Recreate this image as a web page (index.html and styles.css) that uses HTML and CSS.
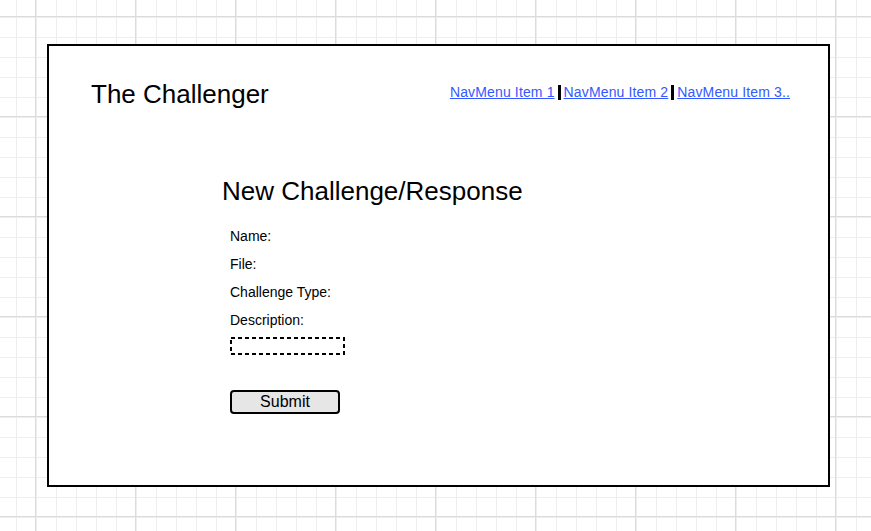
FILE: index.html
```html
<!DOCTYPE html>
<html lang="en">
<head>
<meta charset="utf-8">
<title>The Challenger</title>
<link rel="stylesheet" href="styles.css">
</head>
<body>
<div class="frame">
  <header class="header">
    <div class="brand">The Challenger</div>
    <nav class="nav">
      <a href="#" class="nav-link">NavMenu Item 1</a><span class="sep"></span><a href="#" class="nav-link">NavMenu Item 2</a><span class="sep"></span><a href="#" class="nav-link">NavMenu Item 3..</a>
    </nav>
  </header>
  <main class="content">
    <h1 class="heading">New Challenge/Response</h1>
    <form class="form">
      <div class="label">Name:</div>
      <div class="label">File:</div>
      <div class="label">Challenge Type:</div>
      <div class="label">Description:</div>
      <svg class="desc-box" width="115" height="18" viewBox="0 0 115 18"><rect x="1" y="1" width="113" height="16" fill="none" stroke="#000" stroke-width="2" stroke-dasharray="4 3"/></svg>
      <button type="button" class="submit">Submit</button>
    </form>
  </main>
</div>
</body>
</html>
```

FILE: styles.css
```css
html {
  height: 100%;
  background-color: #ffffff;
  background-image:
    linear-gradient(to right, #dcdcdc 1px, transparent 1px),
    linear-gradient(to bottom, #dcdcdc 1px, transparent 1px),
    linear-gradient(to right, #eeeeee 1px, transparent 1px),
    linear-gradient(to bottom, #eeeeee 1px, transparent 1px);
  background-size: 100px 100px, 100px 100px, 20px 20px, 20px 20px;
  background-position: 35px 0, 0 16px, 16px 0, 0 17px;
}

body {
  margin: 0;
  padding: 44px 0 0 47px;
  font-family: "Liberation Sans", Arial, sans-serif;
  color: #000;
}

.frame {
  box-sizing: border-box;
  width: 783px;
  height: 443px;
  border: 2px solid #000;
  background: #fff;
}

.header {
  display: flex;
  justify-content: space-between;
  align-items: flex-start;
  padding: 33px 38px 0 42px;
}

.brand {
  font-size: 26px;
  line-height: 30px;
}

.nav {
  display: flex;
  align-items: center;
  margin-top: 5px;
  font-size: 14px;
  line-height: 16px;
}

.nav-link {
  color: #3358ff;
  text-decoration: underline;
  letter-spacing: 0.14px;
}

.sep {
  display: inline-block;
  width: 3px;
  height: 15px;
  background: #000;
  margin: 1px 3px 0 3px;
}

.content {
  padding-left: 173px;
  padding-top: 67px;
}

.heading {
  margin: 0;
  font-size: 26px;
  line-height: 30px;
  font-weight: normal;
}

.form {
  display: flex;
  flex-direction: column;
  align-items: flex-start;
  padding-left: 8px;
  margin-top: 16px;
}

.label {
  font-size: 14px;
  line-height: 28px;
}

.desc-box {
  display: block;
  margin-top: 3px;
}

.submit {
  box-sizing: border-box;
  width: 110px;
  height: 24px;
  margin-top: 35px;
  padding: 0;
  border: 2px solid #000;
  border-radius: 4px;
  background: #e6e6e6;
  font-family: "Liberation Sans", Arial, sans-serif;
  font-size: 16px;
  line-height: 20px;
  color: #000;
}
```
